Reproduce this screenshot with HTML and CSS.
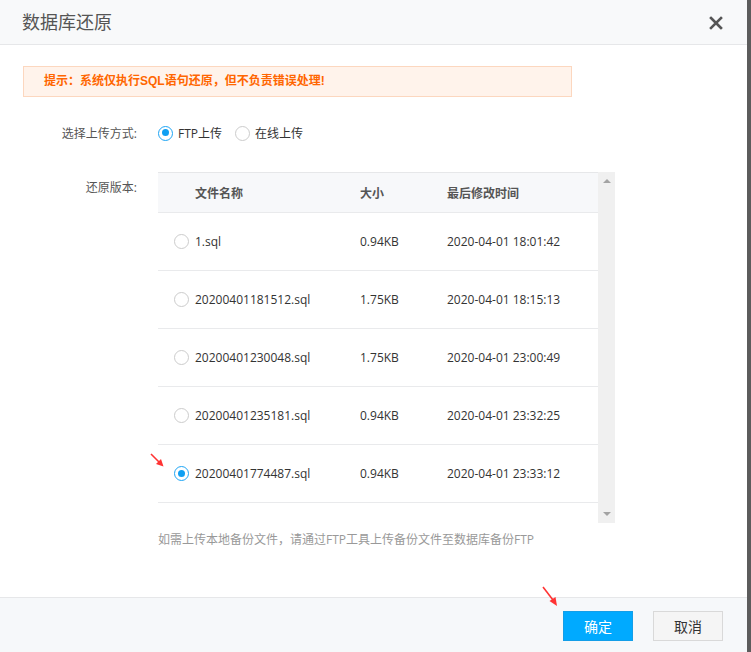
FILE: index.html
```html
<!DOCTYPE html>
<html lang="zh">
<head>
<meta charset="utf-8">
<title>数据库还原</title>
<link rel="stylesheet" href="styles.css">
</head>
<body>
<div class="dialog">
  <div class="dlg-head">
    <span class="dlg-title">数据库还原</span>
    <span class="dlg-close">
      <svg width="14" height="14" viewBox="0 0 14 14"><path d="M2 2 L12 12 M12 2 L2 12" stroke="#555" stroke-width="2.6" stroke-linecap="square"/></svg>
    </span>
  </div>
  <div class="dlg-body">
    <div class="alert">提示：系统仅执行SQL语句还原，但不负责错误处理!</div>
    <div class="form-row row-mode">
      <div class="label">选择上传方式:</div>
      <div class="field radios">
        <label class="radio-item"><span class="radio checked"></span>FTP上传</label>
        <label class="radio-item"><span class="radio"></span>在线上传</label>
      </div>
    </div>
    <div class="form-row row-version">
      <div class="label label-top">还原版本:</div>
      <div class="field">
        <div class="table-box">
          <div class="table">
            <div class="tr th">
              <div class="c-name">文件名称</div>
              <div class="c-size">大小</div>
              <div class="c-time">最后修改时间</div>
            </div>
            <div class="tr">
              <div class="c-name"><span class="radio"></span>1.sql</div>
              <div class="c-size">0.94KB</div>
              <div class="c-time">2020-04-01 18:01:42</div>
            </div>
            <div class="tr">
              <div class="c-name"><span class="radio"></span>20200401181512.sql</div>
              <div class="c-size">1.75KB</div>
              <div class="c-time">2020-04-01 18:15:13</div>
            </div>
            <div class="tr">
              <div class="c-name"><span class="radio"></span>20200401230048.sql</div>
              <div class="c-size">1.75KB</div>
              <div class="c-time">2020-04-01 23:00:49</div>
            </div>
            <div class="tr">
              <div class="c-name"><span class="radio"></span>20200401235181.sql</div>
              <div class="c-size">0.94KB</div>
              <div class="c-time">2020-04-01 23:32:25</div>
            </div>
            <div class="tr">
              <div class="c-name"><span class="radio checked"></span>20200401774487.sql</div>
              <div class="c-size">0.94KB</div>
              <div class="c-time">2020-04-01 23:33:12</div>
            </div>
          </div>
          <div class="scrollbar">
            <span class="arrow-up"></span>
            <span class="arrow-down"></span>
          </div>
        </div>
        <div class="note">如需上传本地备份文件，请通过FTP工具上传备份文件至数据库备份FTP</div>
      </div>
    </div>
  </div>
  <div class="dlg-foot">
    <button class="btn btn-primary">确定</button>
    <button class="btn btn-default">取消</button>
  </div>
  <svg class="mark mark-1" width="16" height="16" viewBox="0 0 16 16"><path d="M1 1 L10 10" stroke="#f33" stroke-width="1.6"/><path d="M13.5 13.5 L6 11 L11 6 Z" fill="#f33"/></svg>
  <svg class="mark mark-2" width="18" height="22" viewBox="0 0 18 22"><path d="M1 1 L11 14" stroke="#f33" stroke-width="1.6"/><path d="M15 20 L7.5 15 L13.5 11 Z" fill="#f33"/></svg>
</div>
</body>
</html>
```

FILE: styles.css
```css
html, body {
  margin: 0;
  padding: 0;
}
body {
  background: #5c5c5c;
  width: 751px;
  height: 652px;
  overflow: hidden;
  font-family: "Open Sans", "Noto Sans CJK SC", sans-serif;
  font-size: 12px;
  color: #333;
}
.dialog {
  position: relative;
  width: 747px;
  height: 652px;
  background: #fff;
  display: flex;
  flex-direction: column;
}
.dlg-head {
  height: 44px;
  border-bottom: 1px solid #e6e7e9;
  background: #f8f9fa;
  display: flex;
  align-items: center;
  justify-content: space-between;
  padding: 0 24px 0 22px;
  flex: none;
}
.dlg-title {
  font-size: 18px;
  color: #555;
  line-height: 44px;
  margin-top: -1px;
}
.dlg-close {
  display: flex;
  width: 14px;
  height: 14px;
  margin-top: 1px;
}
.dlg-body {
  flex: 1;
  padding-top: 21px;
}
.alert {
  margin-left: 23px;
  width: 527px;
  height: 29px;
  border: 1px solid #fcd7bf;
  background: #fff3eb;
  color: #ff6600;
  font-weight: bold;
  line-height: 29px;
  padding-left: 20px;
  font-family: "Liberation Sans", "Noto Sans CJK SC", sans-serif;
}
.form-row {
  display: flex;
}
.label {
  width: 137px;
  text-align: right;
  color: #555;
  flex: none;
  margin-right: 21px;
}
.row-mode {
  margin-top: 24px;
  height: 24px;
  align-items: center;
}
.radios {
  display: flex;
  align-items: center;
}
.radio-item {
  display: flex;
  align-items: center;
  color: #333;
  margin-right: 13px;
}
.radio {
  display: inline-block;
  box-sizing: border-box;
  width: 15px;
  height: 15px;
  border: 1px solid #ccc;
  border-radius: 50%;
  background: #fff;
  margin-right: 5px;
  flex: none;
  position: relative;
}
.radio.checked {
  border: 1.5px solid #1ea5f5;
}
.radio.checked::after {
  content: "";
  position: absolute;
  left: 2.5px;
  top: 2.5px;
  width: 7px;
  height: 7px;
  border-radius: 50%;
  background: #0f9ff2;
}
.row-version {
  margin-top: 27px;
}
.label-top {
  padding-top: 6px;
}
.table-box {
  display: flex;
  width: 457px;
  height: 351px;
}
.table {
  width: 440px;
  flex: none;
}
.tr {
  display: flex;
  align-items: center;
  height: 57px;
  border-bottom: 1px solid #e9eaec;
}
.tr.th {
  height: 39px;
  border-top: 1px solid #e6e7e9;
  background: #f7f8fa;
  font-weight: bold;
  color: #555;
}
.c-name {
  width: 202px;
  box-sizing: border-box;
  padding-left: 16px;
  display: flex;
  align-items: center;
}
.c-name .radio {
  margin-right: 6px;
}
.th .c-name {
  padding-left: 37px;
}
.c-size {
  width: 87px;
}
.c-time {
  flex: 1;
}
.scrollbar {
  width: 17px;
  background: #f0f0f0;
  display: flex;
  flex-direction: column;
  justify-content: space-between;
  align-items: center;
  padding: 7px 0 7px;
  box-sizing: border-box;
}
.arrow-up {
  width: 0;
  height: 0;
  border-left: 4px solid transparent;
  border-right: 4px solid transparent;
  border-bottom: 4px solid #a3a3a3;
}
.arrow-down {
  width: 0;
  height: 0;
  border-left: 4px solid transparent;
  border-right: 4px solid transparent;
  border-top: 4px solid #a3a3a3;
}
.note {
  margin-top: 7px;
  color: #999;
}
.dlg-foot {
  height: 41px;
  border-top: 1px solid #e6e7e9;
  background: #f6f8fa;
  display: flex;
  justify-content: flex-end;
  align-items: flex-start;
  padding: 13px 24px 0 0;
  flex: none;
  gap: 20px;
}
.btn {
  width: 70px;
  height: 30px;
  font-family: "Open Sans", "Noto Sans CJK SC", sans-serif;
  font-size: 14px;
  padding: 0;
  border-radius: 0;
  cursor: pointer;
}
.btn-primary {
  background: #00aaff;
  border: 1px solid #139ee8;
  color: #fff;
}
.btn-default {
  background: #f5f5f5;
  border: 1px solid #d9d9d9;
  color: #333;
}
.mark {
  position: absolute;
}
.mark-1 {
  left: 150px;
  top: 453px;
}
.mark-2 {
  left: 542px;
  top: 586px;
}
```
